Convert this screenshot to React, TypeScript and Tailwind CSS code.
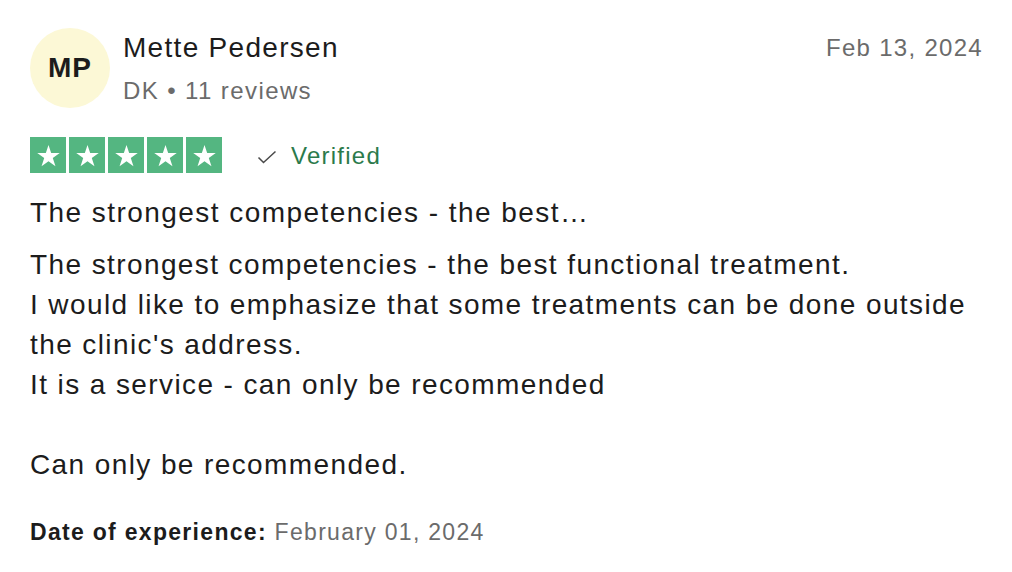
import React from "react";

const Star = () => (
  <div className="w-[36px] h-[36px] bg-[#54b681] flex items-center justify-center">
    <svg width="25" height="25" viewBox="0 0 24 24">
      <path
        d="M12 1.8l2.55 7.85h8.25l-6.68 4.85 2.55 7.85L12 17.5l-6.67 4.85 2.55-7.85L1.2 9.65h8.25z"
        fill="#fff"
      />
    </svg>
  </div>
);

export default function App() {
  return (
    <div
      className="w-[1012px] h-[572px] bg-white text-[#1c1c1c] pl-[30px] pr-[30px] pt-[28px]"
      style={{ fontFamily: '"Liberation Sans", Arial, sans-serif' }}
    >
      <div className="flex items-start">
        <div className="w-[80px] h-[80px] rounded-full bg-[#fcf8d6] flex items-center justify-center text-[28px] tracking-[1px] font-bold text-[#1c1c1c] shrink-0">
          MP
        </div>
        <div className="ml-[13px] flex flex-col">
          <div className="text-[28px] tracking-[1.3px] leading-[40px]">Mette Pedersen</div>
          <div className="text-[24px] tracking-[1.4px] leading-[30px] mt-[8px] text-[#6b6b6b]">DK • 11 reviews</div>
        </div>
        <div className="ml-auto text-[24px] tracking-[1.3px] leading-[40px] text-[#6b6b6b] -mr-[1px]">Feb 13, 2024</div>
      </div>

      <div className="flex items-center mt-[28px]">
        <div className="flex gap-[3px]">
          <Star />
          <Star />
          <Star />
          <Star />
          <Star />
        </div>
        <svg className="ml-[35px] mt-[3px]" width="20" height="14" viewBox="0 0 20 14">
          <path d="M1.5 7.5l5 5L18.5 1.5" fill="none" stroke="#4a4a4a" strokeWidth="1.5" />
        </svg>
        <span className="ml-[14px] mt-[2px] text-[24px] tracking-[1.25px] text-[#2b7a4b]">Verified</span>
      </div>

      <div className="mt-[19px] text-[28px] tracking-[1.45px] leading-[40px]">The strongest competencies - the best…</div>

      <div className="mt-[12px] text-[28px] tracking-[1.4px] leading-[40px]">
        <div>The strongest competencies - the best functional treatment.</div>
        <div>I would like to emphasize that some treatments can be done outside</div>
        <div>the clinic's address.</div>
        <div>It is a service - can only be recommended</div>
        <div>&nbsp;</div>
        <div>Can only be recommended.</div>
      </div>

      <div className="mt-[31px] text-[23px] tracking-[1.3px] leading-[32px]">
        <span className="font-bold">Date of experience:</span>{" "}
        <span className="text-[#6b6b6b]">February 01, 2024</span>
      </div>
    </div>
  );
}
